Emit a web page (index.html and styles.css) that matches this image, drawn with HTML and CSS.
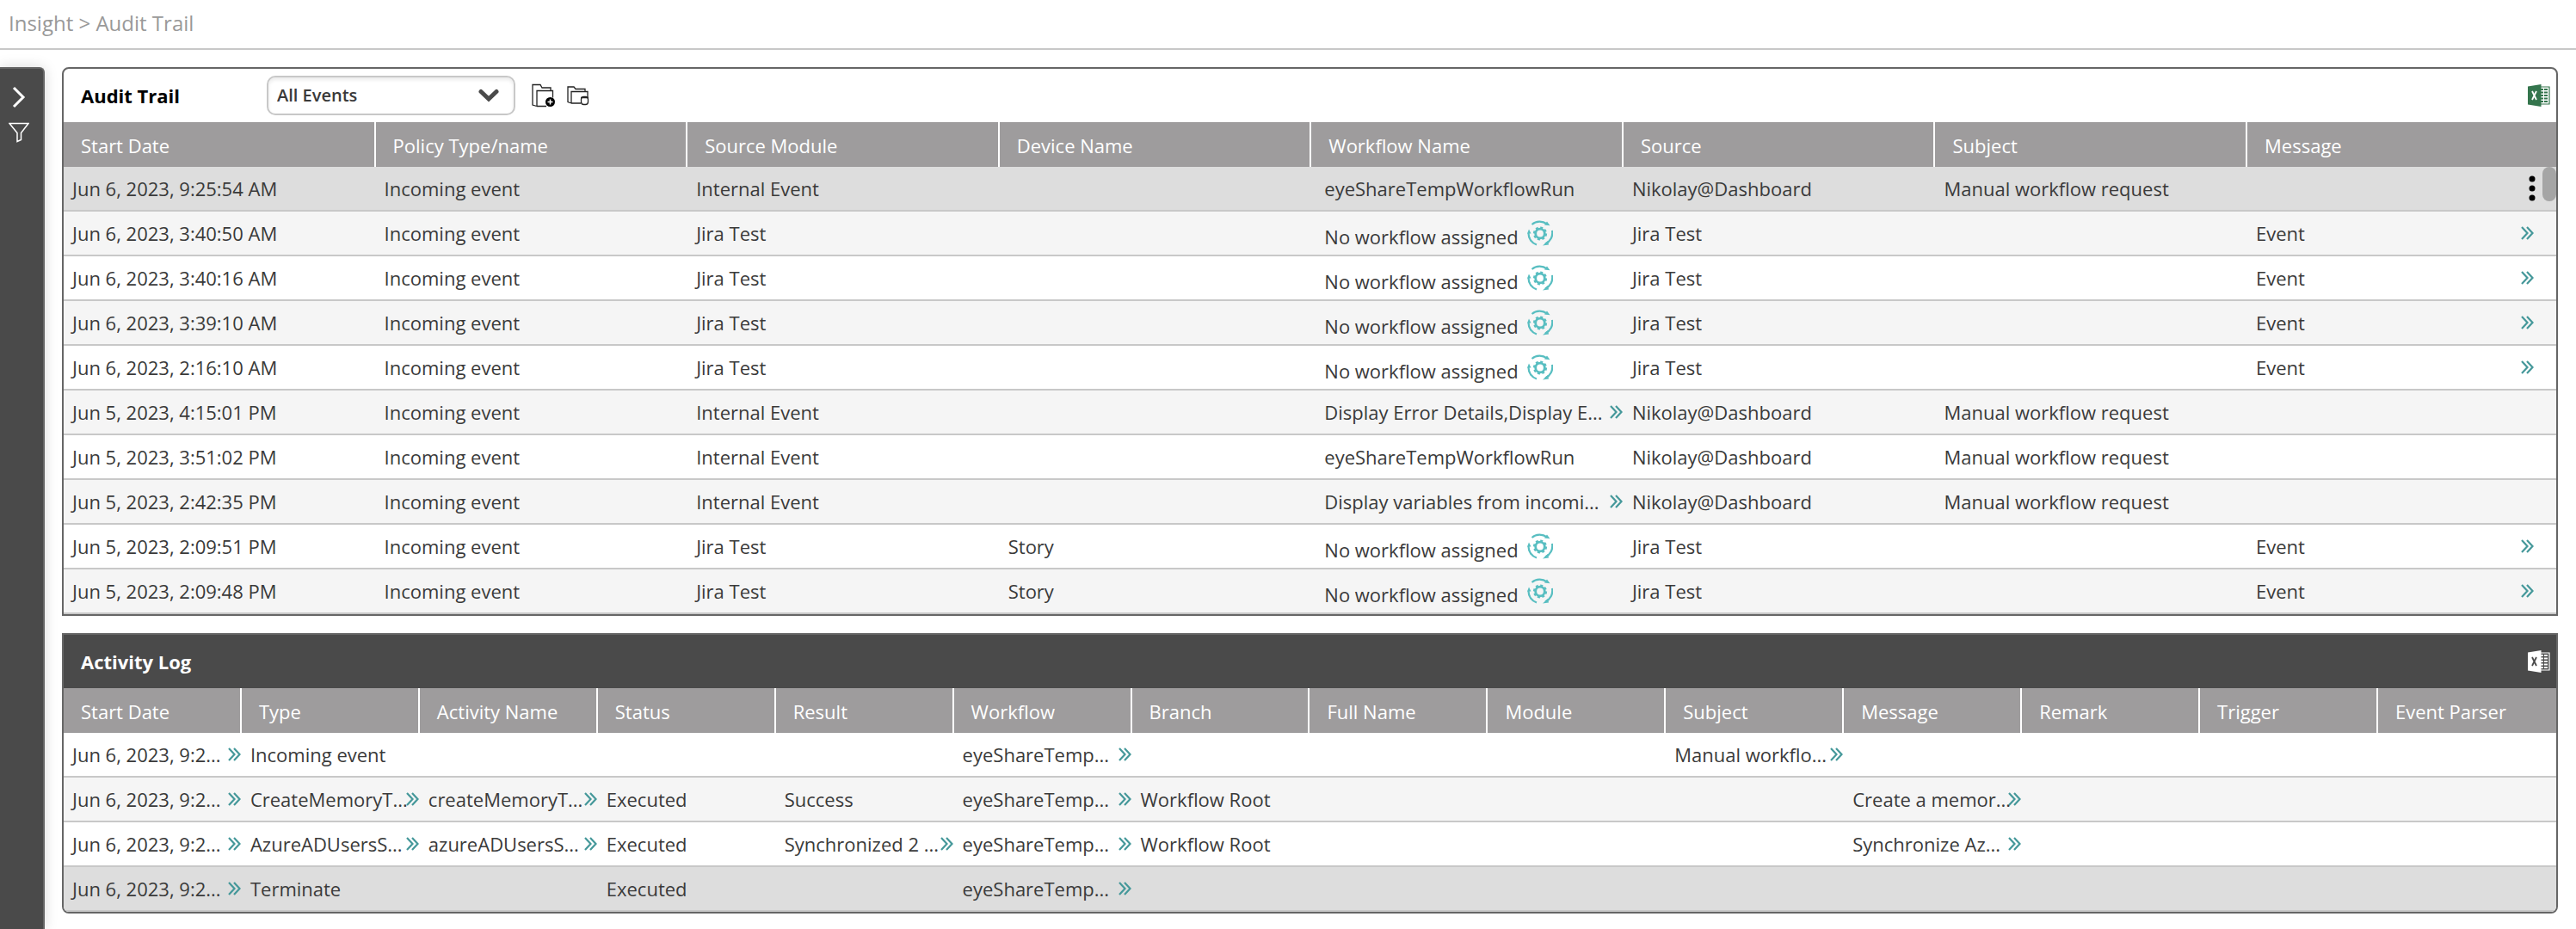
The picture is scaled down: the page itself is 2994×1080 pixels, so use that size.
FILE: index.html
```html
<!DOCTYPE html>
<html lang="en">
<head>
<meta charset="utf-8">
<title>Audit Trail</title>
<link rel="stylesheet" href="styles.css">
</head>
<body>
<svg class="sprite" aria-hidden="true">
  <symbol id="chevrons" viewBox="0 0 15 16"><path d="M1 1l6.500 7L1 15M7 1l6.500 7L7 15" fill="none" stroke="currentColor" stroke-width="2.200"/></symbol>
  <symbol id="assign" viewBox="0 0 30 30">
    <g fill="none" stroke="currentColor" stroke-width="2.200">
      <path d="M5.500 5A14 14 0 0 1 23 4.500M29 12A14 14 0 0 1 21 27.500M11 28.500A14 14 0 0 1 1.500 15"/>
      <circle cx="15" cy="15.500" r="5.300" stroke-width="2.800"/>
      <circle cx="15" cy="15.500" r="7" stroke-width="2.200" stroke-dasharray="3 2.500"/>
    </g>
    <path d="M20 5.500l6.500.8L23 1.500zM24 24l-6 5.500 7-1zM0 15.500l2-5 2.500 5z" fill="currentColor"/>
  </symbol>
  <symbol id="excel" viewBox="0 0 26 26">
    <path d="M15 3h10v20H15" fill="none" stroke="currentColor" stroke-width="1.200"/>
    <path d="M15 6h8M15 9.500h8M15 13h8M15 16.500h8M15 20h8" stroke="currentColor" stroke-width="2"/>
    <path d="M18.500 4v18" stroke="var(--gap)" stroke-width="1"/>
    <path d="M0 2.500L15.500 0v26L0 23.500z" fill="currentColor"/>
    <path d="M5 8l5 10M10 8L5 18" stroke="var(--gap)" stroke-width="1.800"/>
  </symbol>
</svg>
<header class="topbar"><nav class="crumbs" aria-label="Breadcrumb"><a href="#">Insight</a> &gt; Audit Trail</nav></header>
<div class="layout">
  <aside class="rail">
    <button class="rail-btn" aria-label="Expand"><svg width="16" height="26" viewBox="0 0 16 26"><path d="M2 2l11 11L2 24" fill="none" stroke="#fff" stroke-width="3"/></svg></button>
    <button class="rail-btn" aria-label="Filter"><svg width="24" height="24" viewBox="0 0 24 24"><path d="M1 1.500h22l-8.500 11v8L10 22.500v-10z" fill="none" stroke="#fff" stroke-width="1.500"/></svg></button>
  </aside>
  <main class="content">
    <section class="panel panel-audit">
      <div class="panel-head">
        <h2>Audit Trail</h2>
        <div class="picker">
          <select aria-label="Event view"><option>All Events</option></select>
          <svg class="picker-arrow" width="24" height="16" viewBox="0 0 24 16"><path d="M3 3.500l9 8.500 9-8.500" fill="none" stroke="#4a4a4a" stroke-width="5" stroke-linecap="round"/></svg>
        </div>
        <button class="tool" aria-label="Save view"><svg width="28" height="28" viewBox="0 0 28 28"><path d="M6 26.500L1 25V1.500h9l2 3.500h10v3M6 26.500V8.500h18.500v8M6 26.500h11" fill="none" stroke="#222" stroke-width="1.300"/><circle cx="21.500" cy="21.500" r="5.500"/><path d="M21.500 18.500v6M18.500 21.500h6" stroke="#fff" stroke-width="1.500"/></svg></button>
        <button class="tool" aria-label="Delete view"><svg width="28" height="28" viewBox="0 0 28 28"><path d="M6 23l-4-1.500V4h7l2 2.500h11V9M6 23V9.500h19v7M6 23h11" fill="none" stroke="#222" stroke-width="1.300"/><rect x="17.500" y="15.500" width="8" height="9" rx="3" fill="#fff" stroke="#222" stroke-width="1.300"/><path d="M17 16.500h9" stroke="#222" stroke-width="1.500"/></svg></button>
        <button class="export" aria-label="Export to Excel"><svg width="26" height="26"><use href="#excel"/></svg></button>
      </div>
      <table class="grid grid-audit"><thead><tr id="audit-head"></tr></thead><tbody id="audit-body"></tbody></table>
      <span class="thumb"></span>
    </section>
    <section class="panel panel-log">
      <div class="panel-head">
        <h2>Activity Log</h2>
        <button class="export" aria-label="Export to Excel"><svg width="26" height="26"><use href="#excel"/></svg></button>
      </div>
      <table class="grid grid-log"><thead><tr id="log-head"></tr></thead><tbody id="log-body"></tbody></table>
    </section>
  </main>
</div>
<script src="app.js"></script>
</body>
</html>
```
FILE: styles.css
```css
* { box-sizing: border-box; }
body { margin: 0; min-height: 100vh; display: flex; flex-direction: column; background: #fff; color: #3a3a3a; font: 22px/30px "Open Sans", "Noto Sans", sans-serif; }
button { border: 0; padding: 0; background: none; color: inherit; font: inherit; cursor: pointer; }
svg { display: block; }
.sprite { position: absolute; width: 0; height: 0; }
.topbar { height: 58px; padding: 12px 10px; border-bottom: 2px solid #c8c8c8; color: #999; font-size: 24px; }
.crumbs a { color: inherit; text-decoration: none; }
.layout { flex: 1; display: flex; gap: 20px; padding: 20px 21px 0 0; }
.rail { width: 52px; padding: 20px 16px 20px 10px; display: flex; flex-direction: column; align-items: center; gap: 16px; background: #4a4a4a; border: 2px solid #666; border-width: 2px 2px 0 0; border-radius: 0 6px 0 0; box-shadow: 0 0 16px rgba(0, 0, 0, .15); }
.content { flex: 1; min-width: 0; display: flex; flex-direction: column; gap: 20px; padding-bottom: 18px; }
.panel { position: relative; border: 2px solid #666; overflow: hidden; }
.panel-audit { border-radius: 8px 8px 0 0; --gap: #fff; }
.panel-log { border-radius: 0 0 8px 8px; --gap: #4a4a4a; }
.panel-head { height: 62px; padding: 0 7px 0 20px; display: flex; align-items: center; }
.panel-log .panel-head { background: #4a4a4a; color: #fff; }
h2 { margin: 0; width: 216px; font-size: 22px; line-height: 30px; font-weight: 700; color: #000; }
.panel-log h2 { color: #fff; }
.picker { position: relative; width: 289px; margin-right: 19px; }
.picker select { appearance: none; display: block; width: 100%; height: 46px; padding: 0 10px; border: 2px solid #c8c8c8; border-radius: 10px; background: #fff; color: #3a3a3a; font: inherit; font-weight: 600; font-size: 20px; box-shadow: inset 0 3px 4px rgba(0, 0, 0, .08); }
.picker-arrow { position: absolute; right: 19px; top: 15px; pointer-events: none; }
.tool { margin-right: 12px; }
.export { margin-left: auto; color: #34754d; }
.panel-log .export { color: #fff; }
.grid { width: 100%; border-collapse: separate; border-spacing: 0; table-layout: fixed; }
.grid th { height: 52px; padding: 2px 20px 0; border-right: 2px solid #fff; background: #9e9c9d; color: #fff; font-weight: 400; text-align: left; white-space: nowrap; }
.grid th:last-child { border-right: 0; }
.grid-audit th:not(:last-child) { width: 12.516%; }
.grid td { height: 52px; padding: 0 1px 0 10px; border-bottom: 2px solid #c8c8c8; white-space: nowrap; }
.grid tr:nth-child(even) td { background: #f5f5f5; }
.grid tr.selected td { background: #ddd; }
.cell { display: flex; align-items: center; justify-content: space-between; }
.cell span { min-width: 0; }
.more { flex: none; color: #45989a; }
.flow { padding-left: 5px; }
.flow-none { justify-content: flex-start; gap: 10px; }
.flow-none span { padding-top: 8px; }
.flow-none button { color: #58bec1; }
.grid-audit td:last-child { padding-right: 26px; }
.grid-audit .selected td:last-child { padding-right: 24px; }
.menu { margin-left: auto; color: #000; }
.thumb { position: absolute; right: 0; top: 114px; width: 16px; height: 40px; border-radius: 8px; background: #a5a5a5; }
```
FILE: app.js
```js
const MORE = '<button class="more" aria-label="Show more"><svg width="15" height="16"><use href="#chevrons"/></svg></button>';
const ASSIGN = '<button aria-label="Assign workflow"><svg width="30" height="30"><use href="#assign"/></svg></button>';
const MENU = '<button class="menu" aria-label="Row menu"><svg width="8" height="32" viewBox="0 0 8 32"><circle cx="4" cy="5" r="3.500"/><circle cx="4" cy="16" r="3.500"/><circle cx="4" cy="27" r="3.500"/></svg></button>';

const NONE = "No workflow assigned";
const MANUAL = "Manual workflow request";
const auditCols = ["Start Date", "Policy Type/name", "Source Module", "Device Name", "Workflow Name", "Source", "Subject", "Message"];
const internal = (date, flow) => [date, "Incoming event", "Internal Event", "", flow, "Nikolay@Dashboard", MANUAL, ""];
const jira = (date, device) => [date, "Incoming event", "Jira Test", device, NONE, "Jira Test", "", "Event>"];
const audit = [
  internal("Jun 6, 2023, 9:25:54 AM", "eyeShareTempWorkflowRun"),
  jira("Jun 6, 2023, 3:40:50 AM", ""),
  jira("Jun 6, 2023, 3:40:16 AM", ""),
  jira("Jun 6, 2023, 3:39:10 AM", ""),
  jira("Jun 6, 2023, 2:16:10 AM", ""),
  internal("Jun 5, 2023, 4:15:01 PM", "Display Error Details,Display E...>"),
  internal("Jun 5, 2023, 3:51:02 PM", "eyeShareTempWorkflowRun"),
  internal("Jun 5, 2023, 2:42:35 PM", "Display variables from incomi...>"),
  jira("Jun 5, 2023, 2:09:51 PM", "Story"),
  jira("Jun 5, 2023, 2:09:48 PM", "Story")
];

const logCols = ["Start Date", "Type", "Activity Name", "Status", "Result", "Workflow", "Branch", "Full Name", "Module", "Subject", "Message", "Remark", "Trigger", "Event Parser"];
const DATE = "Jun 6, 2023, 9:2...>";
const FLOW = "eyeShareTemp...>";
const log = [
  [DATE, "Incoming event", "", "", "", FLOW, "", "", "", "Manual workflo...>", "", "", "", ""],
  [DATE, "CreateMemoryT...>", "createMemoryT...>", "Executed", "Success", FLOW, "Workflow Root", "", "", "", "Create a memor...>", "", "", ""],
  [DATE, "AzureADUsersS...>", "azureADUsersS...>", "Executed", "Synchronized 2 ...>", FLOW, "Workflow Root", "", "", "", "Synchronize Az...>", "", "", ""],
  [DATE, "Terminate", "", "Executed", "", FLOW, "", "", "", "", "", "", "", ""]
];

// A trailing ">" marks a shortened value that gets an expand button.
function cell(text, classes) {
  const more = text.endsWith(">");
  const label = more ? text.slice(0, -1) : text;
  return `<td><div class="cell ${classes}"><span>${label}</span>${more ? MORE : ""}${text === NONE ? ASSIGN : ""}</div></td>`;
}

function fill(name, cols, rows, selected) {
  document.getElementById(name + "-head").innerHTML = cols.map(c => `<th scope="col">${c}</th>`).join("");
  document.getElementById(name + "-body").innerHTML = rows.map((row, r) => {
    const cells = row.map((text, i) => {
      if (name === "audit" && r === selected && i === 7) return `<td><div class="cell">${MENU}</div></td>`;
      const flow = name === "audit" && i === 4 ? "flow" : "";
      return cell(text, text === NONE ? flow + " flow-none" : flow);
    });
    return `<tr${r === selected ? ' class="selected"' : ""}>${cells.join("")}</tr>`;
  }).join("");
}

fill("audit", auditCols, audit, 0);
fill("log", logCols, log, 3);
```
